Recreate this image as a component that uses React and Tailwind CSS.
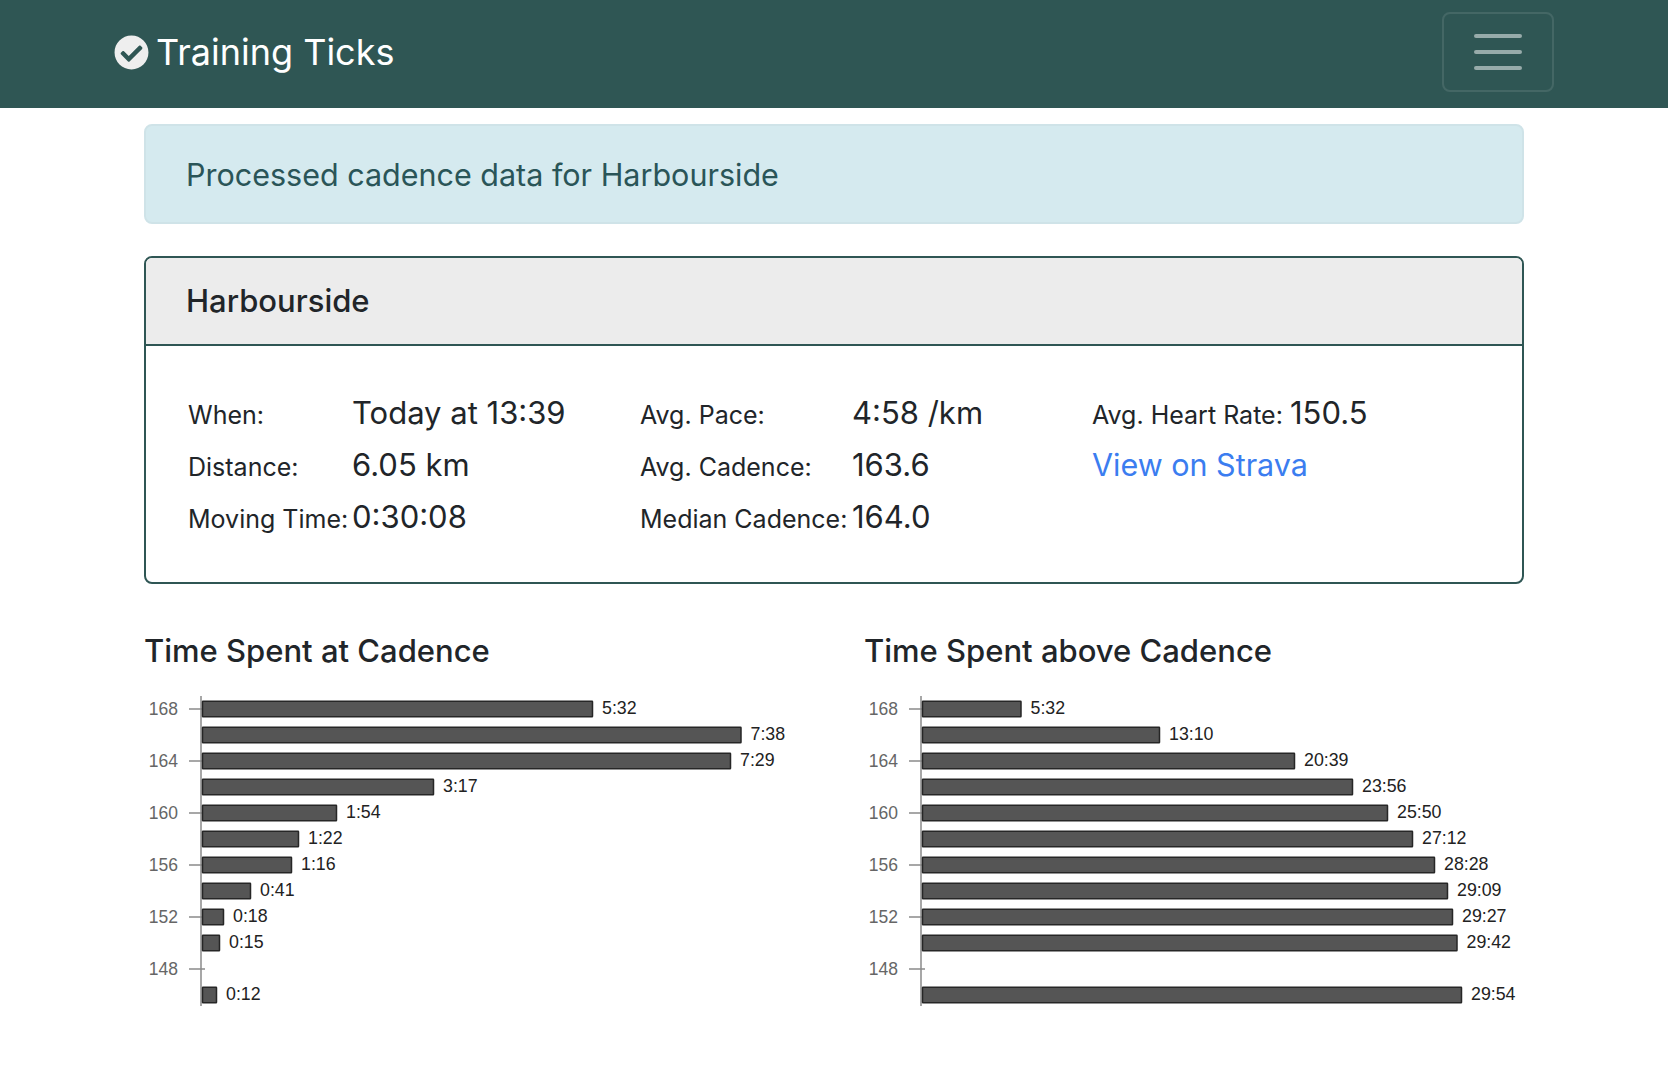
import { FaCheckCircle } from 'react-icons/fa';

const atCadence = [
  { label: '168', end: 593, time: '5:32' },
  { end: 741.5, time: '7:38' },
  { label: '164', end: 731, time: '7:29' },
  { end: 434, time: '3:17' },
  { label: '160', end: 337, time: '1:54' },
  { end: 299, time: '1:22' },
  { label: '156', end: 292, time: '1:16' },
  { end: 251, time: '0:41' },
  { label: '152', end: 224, time: '0:18' },
  { end: 220, time: '0:15' },
  { label: '148' },
  { end: 217, time: '0:12' },
];

const aboveCadence = [
  { label: '168', end: 1021.5, time: '5:32' },
  { end: 1160, time: '13:10' },
  { label: '164', end: 1295, time: '20:39' },
  { end: 1353, time: '23:56' },
  { label: '160', end: 1388, time: '25:50' },
  { end: 1413, time: '27:12' },
  { label: '156', end: 1435, time: '28:28' },
  { end: 1448, time: '29:09' },
  { label: '152', end: 1453, time: '29:27' },
  { end: 1457.5, time: '29:42' },
  { label: '148' },
  { end: 1462, time: '29:54' },
];

const stats = [
  [
    { label: 'When:', value: 'Today at 13:39' },
    { label: 'Distance:', value: '6.05 km' },
    { label: 'Moving Time:', value: '0:30:08' },
  ],
  [
    { label: 'Avg. Pace:', value: '4:58 /km' },
    { label: 'Avg. Cadence:', value: '163.6' },
    { label: 'Median Cadence:', value: '164.0' },
  ],
  [
    { label: 'Avg. Heart Rate:', value: '150.5' },
    { link: 'View on Strava' },
  ],
];

const labelWidths = ['w-[164px]', 'w-[212px]', 'w-[198px]'];

function BarChart({ rows, origin }) {
  // origin is the page x of the svg, bar ends above are in page pixels
  const axis = 57;
  return (
    <svg width="660" height="320" className="block font-['Liberation_Sans',Arial,sans-serif]">
      <line x1={axis} x2={axis} y1="1" y2="311" stroke="#8a8a8a" strokeWidth="1.5" />
      {rows.map((row, i) => {
        const y = 6 + i * 26;
        return (
          <g key={i}>
            {row.label && (
              <>
                <text x="34" y={y + 14} textAnchor="end" fontSize="17.5" fill="#666666">{row.label}</text>
                <line x1="45" x2="61" y1={y + 8} y2={y + 8} stroke="#8a8a8a" strokeWidth="1.5" />
              </>
            )}
            {row.end && (
              <>
                <rect x={axis + 1.5} y={y + 0.25} width={row.end - origin - axis - 2} height="15.5" rx="0.5" fill="#555555" stroke="#262626" strokeWidth="1.5" />
                <text x={row.end - origin + 9} y={y + 13} fontSize="17.8" fill="#222222">{row.time}</text>
              </>
            )}
          </g>
        );
      })}
    </svg>
  );
}

export default function App() {
  return (
    <div className="min-h-[1082px] bg-white font-['Inter',sans-serif] text-[#212529]">
      <nav className="flex h-[108px] items-center justify-between bg-[#2f5654] px-[114px] pb-[4px]">
        <a className="flex items-center gap-[7px] text-[36px] leading-none text-white">
          <FaCheckCircle className="h-[35px] w-[35px] text-[#eeeeee]" />
          <span>Training Ticks</span>
        </a>
        <button className="flex h-[80px] w-[112px] flex-col items-center justify-center gap-[12px] rounded-lg border-2 border-white/10">
          <span className="h-[4px] w-[48px] rounded-full bg-white/50" />
          <span className="h-[4px] w-[48px] rounded-full bg-white/50" />
          <span className="h-[4px] w-[48px] rounded-full bg-white/50" />
        </button>
      </nav>

      <main className="px-[144px] pt-[16px]">
        <div className="flex h-[100px] items-center rounded-lg border-2 border-[#cfe3e8] bg-[#d5eaef] px-[40px] pt-[1px] text-[30.5px] text-[#2a5558]">
          Processed cadence data for Harbourside
        </div>

        <section className="mt-[32px] rounded-lg border-2 border-[#2f5654]">
          <h2 className="flex h-[88px] items-center rounded-t-md border-b-2 border-[#2f5654] bg-[#ececec] px-[40px] text-[31px] font-medium">
            Harbourside
          </h2>
          <div className="flex h-[236px] items-start px-[42px] pt-[41px]">
            {stats.map((col, c) => (
              <div key={c} className="w-[452px] shrink-0">
                {col.map((row, r) => (
                  <div key={r} className="flex h-[52px] items-center whitespace-nowrap">
                    {row.link ? (
                      <a className="text-[30.5px] text-[#3b7df0]">{row.link}</a>
                    ) : (
                      <>
                        <span className={`${labelWidths[c]} pt-[5px] text-[25px]`}>{row.label}</span>
                        <span className="text-[31px]">{row.value}</span>
                      </>
                    )}
                  </div>
                ))}
              </div>
            ))}
          </div>
        </section>

        <div className="mt-[45px] grid grid-cols-[720px_1fr]">
          <div>
            <h3 className="text-[31px] font-medium leading-[44px]">Time Spent at Cadence</h3>
            <div className="mt-[22px]">
              <BarChart rows={atCadence} origin={144} />
            </div>
          </div>
          <div>
            <h3 className="text-[31px] font-medium leading-[44px]">Time Spent above Cadence</h3>
            <div className="mt-[22px]">
              <BarChart rows={aboveCadence} origin={864} />
            </div>
          </div>
        </div>
      </main>
    </div>
  );
}
